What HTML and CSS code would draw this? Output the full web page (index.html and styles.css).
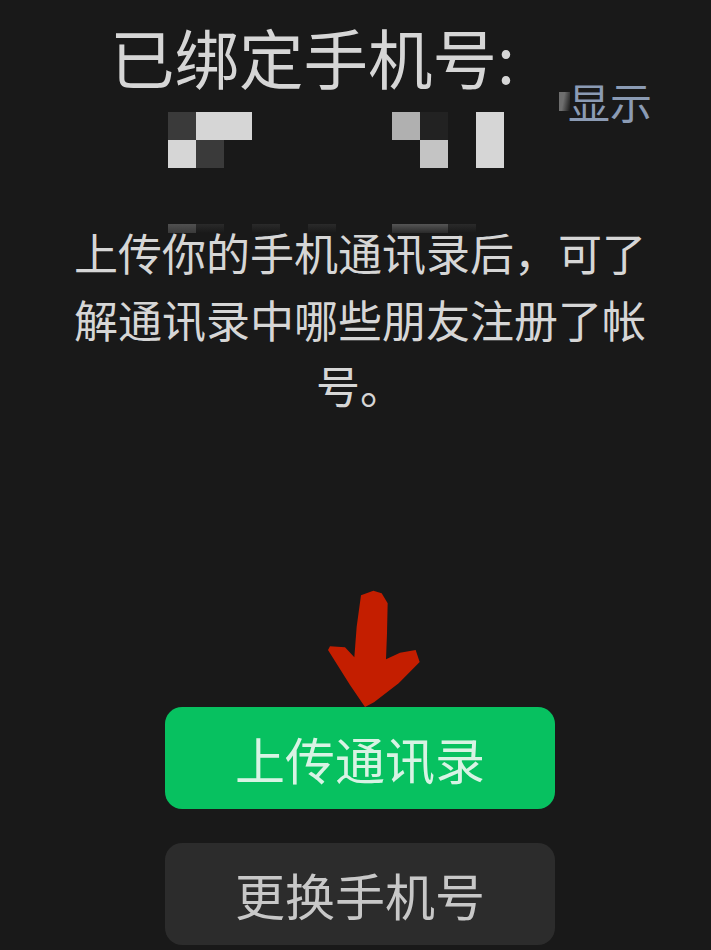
FILE: index.html
```html
<!DOCTYPE html>
<html lang="zh-CN">
<head>
<meta charset="utf-8">
<title>已绑定手机号</title>
<link rel="stylesheet" href="styles.css">
</head>
<body>
<main class="page">
  <section class="bound">
    <div class="bound-main">
      <h1 class="title">已绑定手机号:</h1>
      <div class="mosaic" aria-hidden="true">
        <i class="c d"></i><i class="c l"></i><i class="c l"></i><i class="c"></i><i class="c"></i><i class="c"></i><i class="c"></i><i class="c"></i><i class="c m"></i><i class="c k"></i><i class="c"></i><i class="c l"></i>
        <i class="c l"></i><i class="c d"></i><i class="c"></i><i class="c"></i><i class="c"></i><i class="c"></i><i class="c"></i><i class="c"></i><i class="c"></i><i class="c n"></i><i class="c"></i><i class="c l"></i>
      </div>
    </div>
    <a class="show"><span class="smudge"></span>显示</a>
  </section>
  <p class="desc">
    <span class="trace" aria-hidden="true"><i class="t t1"></i><i class="t t2"></i><i class="t"></i><i class="t t2"></i><i class="t"></i><i class="t t2"></i><i class="t"></i><i class="t"></i><i class="t t3"></i><i class="t t3"></i><i class="t t2"></i></span>
    上传你的手机通讯录后，可了<br>解通讯录中哪些朋友注册了帐<br>号。</p>
  <div class="arrow">
    <svg viewBox="0 0 450 411" width="150" height="137">
      <path class="arrow-shape" d="M183 76 L220 62 L245 70 L263 100 L261 190 L258 268 L300 248 L347 240 L359 276 L296 340 L222 397 L195 411 L150 345 L84 240 L90 229 L135 232 L163 262 L170 170 Z"/>
    </svg>
  </div>
  <div class="actions">
    <button class="btn primary">上传通讯录</button>
    <button class="btn secondary">更换手机号</button>
  </div>
</main>
</body>
</html>
```
FILE: styles.css
```css
* { box-sizing: border-box; }
html, body { margin: 0; height: 100%; background: #191919; }
body { font-family: "Noto Sans CJK SC", "Noto Sans", sans-serif; overflow: hidden; }
.page { width: 711px; height: 950px; display: flex; flex-direction: column; overflow: hidden; }
.bound { width: 100%; height: 168px; padding: 17px 0 0 110px; display: flex; align-items: flex-start; }
.bound-main { width: 447px; }
.title { margin: 0; font-size: 64.5px; font-weight: 400; line-height: 78px; color: #d6d6d6; white-space: nowrap; }
.mosaic { margin: 17px 0 0 58px; display: grid; grid-template-columns: repeat(12, 28px); grid-auto-rows: 28px; }
.c.d { background: #3a3a3a; }
.c.l { background: #d6d6d6; }
.c.m { background: #b0b0b0; }
.c.k { background: #222222; }
.c.n { background: #c4c4c4; }
.show { position: relative; margin: 54px 0 0 11px; font-size: 42px; line-height: 60px; color: #8b9bb4; font-weight: 400; white-space: nowrap; }
.smudge { position: absolute; left: -9px; top: 21px; width: 11px; height: 19px; background: linear-gradient(100deg, #6e6e6e, #6e6e6e 40%, rgba(110, 110, 110, 0)); }
.desc { position: relative; margin: 51px 0 0 70px; width: 580px; font-size: 44px; font-weight: 400; line-height: 66.5px; color: #d6d6d6; text-align: center; }
.trace { position: absolute; left: 98px; top: 5px; display: grid; grid-template-columns: repeat(12, 28px); height: 9px; }
.t1 { background: linear-gradient(#505050, #3a3a3a); }
.t2 { background: linear-gradient(#2a2a2a, #191919); }
.t3 { background: linear-gradient(#555555, #2a2a2a); }
.arrow { height: 137px; margin: 151px 0 0 300px; flex: none; position: relative; z-index: 1; }
.arrow-shape { fill: #c41e00; }
.actions { display: flex; flex-direction: column; gap: 34px; margin-left: 165px; }
.btn { display: block; width: 390px; height: 102px; border: 0; border-radius: 17px; font-family: inherit; font-size: 50px; font-weight: 400; padding: 0; }
.primary { background: #07c160; color: #d8f3e4; }
.secondary { background: #2c2c2c; color: #c8c8c8; }
```
